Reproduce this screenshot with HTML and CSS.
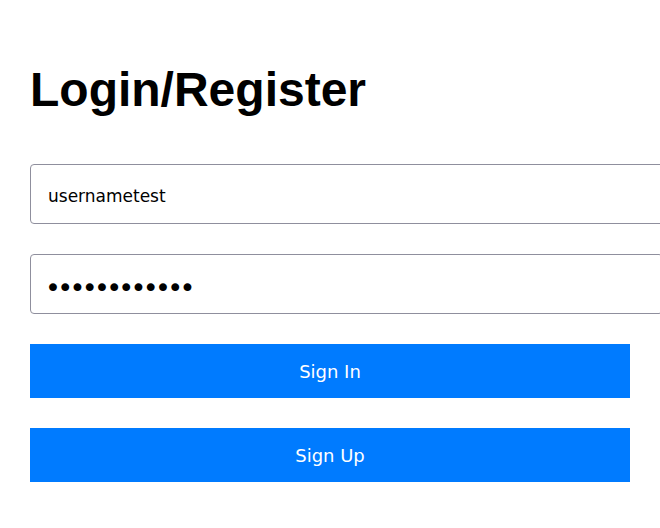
FILE: index.html
```html
<!DOCTYPE html>
<html lang="en">
<head>
<meta charset="utf-8">
<title>Login/Register</title>
<link rel="stylesheet" href="styles.css">
</head>
<body>
<main class="page">
  <h1 class="title">Login/Register</h1>
  <form class="form">
    <input class="field" type="text" value="usernametest">
    <input class="field field-secret" type="password" value="passwordtest">
    <button class="btn" type="button">Sign In</button>
    <button class="btn" type="button">Sign Up</button>
  </form>
</main>
</body>
</html>
```
FILE: styles.css
```css
html, body {
  margin: 0;
  padding: 0;
  background: #ffffff;
  overflow: hidden;
}

.page {
  padding: 30px;
}

.title {
  margin: 33px 0 47px;
  font-family: "Liberation Sans", Arial, sans-serif;
  font-weight: bold;
  font-size: 48px;
  line-height: 54px;
  color: #000;
}

.form {
  display: flex;
  flex-direction: column;
  align-items: flex-start;
  gap: 30px;
}

.field {
  box-sizing: content-box;
  width: 100%;
  height: 54px;
  padding: 4px 17px 0;
  margin: 0;
  border: 1px solid #8f8f9d;
  border-radius: 4px;
  background: #fff;
  font-family: "DejaVu Sans", sans-serif;
  font-size: 17px;
  color: #000;
  outline: none;
}

.field-secret {
  font-size: 27px;
  letter-spacing: -3.7px;
  padding-top: 6px;
  padding-left: 14px;
  height: 52px;
}

.btn {
  width: 600px;
  height: 54px;
  margin: 0;
  padding: 0;
  border: none;
  border-radius: 0;
  background: #007bff;
  color: #fff;
  font-family: "DejaVu Sans", sans-serif;
  font-size: 18px;
}
```
